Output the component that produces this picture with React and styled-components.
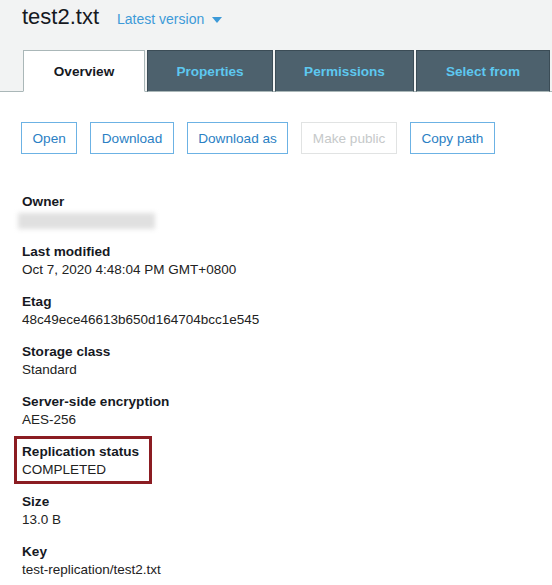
import React from "react";
import styled, { createGlobalStyle } from "styled-components";

const GlobalStyle = createGlobalStyle`
  html, body {
    margin: 0;
    padding: 0;
    background: #ffffff;
  }
  body {
    font-family: "Liberation Sans", Arial, sans-serif;
    color: #16191f;
  }
  *, *::before, *::after { box-sizing: border-box; }
`;

const Page = styled.div`
  width: 552px;
  min-height: 585px;
  background: #ffffff;
  overflow: hidden;
`;

const Header = styled.header`
  background: #f2f3f3;
`;

const TitleRow = styled.div`
  display: flex;
  align-items: baseline;
  gap: 18px;
  padding: 2px 22px 0;
  height: 50px;
`;

const Title = styled.h1`
  margin: 0;
  font-size: 22px;
  line-height: 30px;
  font-weight: 400;
  color: #16191f;
`;

const VersionPicker = styled.button`
  display: inline-flex;
  align-items: center;
  gap: 8px;
  border: 0;
  background: transparent;
  padding: 0;
  font-family: inherit;
  font-size: 14px;
  color: #3d9ad8;
  cursor: pointer;
`;

const Caret = styled.span`
  display: inline-block;
  width: 0;
  height: 0;
  border-left: 5px solid transparent;
  border-right: 5px solid transparent;
  border-top: 6px solid #3d9ad8;
  margin-top: 1px;
`;

const TabBar = styled.nav`
  display: flex;
  align-items: flex-end;
  gap: 2px;
  padding-left: 23px;
  border-bottom: 1px solid #aab7b8;
`;

const Tab = styled.div`
  width: ${(p) => p.$w}px;
  flex: none;
  height: 42px;
  display: flex;
  align-items: center;
  justify-content: center;
  margin-bottom: -1px;
  white-space: nowrap;
  font-size: 13.6px;
  font-weight: 700;
  border: 1px solid ${(p) => (p.$active ? "#aab7b8" : "#3b4c56")};
  border-bottom: ${(p) => (p.$active ? "1px solid #ffffff" : "1px solid #aab7b8")};
  background: ${(p) => (p.$active ? "#ffffff" : "#4d616d")};
  color: ${(p) => (p.$active ? "#16191f" : "#5dc8f0")};
`;

const Content = styled.main`
  padding: 30px 0 0 21px;
`;

const ButtonRow = styled.div`
  display: flex;
  gap: 13px;
`;

const ActionButton = styled.button`
  height: 32px;
  padding: 0 10.5px;
  background: #ffffff;
  font-family: inherit;
  font-size: 13.6px;
  border: 1px solid ${(p) => (p.disabled ? "#e1e3e3" : "#6cb2e4")};
  color: ${(p) => (p.disabled ? "#c6c9ca" : "#2b7fc4")};
  border-radius: 0;
`;

const PropList = styled.dl`
  margin: 39px 0 0 1px;
  display: flex;
  flex-direction: column;
  gap: 14px;
`;

const PropItem = styled.div`
  position: relative;
  width: fit-content;
  min-width: 120px;
`;

const Highlight = styled(PropItem)`
  &::after {
    content: "";
    position: absolute;
    left: -8px;
    top: -7px;
    width: 138px;
    height: 48px;
    border: 3px solid #8b1c22;
    pointer-events: none;
  }
`;

const Label = styled.dt`
  font-size: 13.6px;
  line-height: 18px;
  font-weight: 700;
  color: #16191f;
`;

const Value = styled.dd`
  margin: 0;
  font-size: 13.5px;
  line-height: 18px;
  color: #222222;
  white-space: nowrap;
`;

const Redacted = styled.div`
  width: 137px;
  height: 16px;
  margin: 2px 0 0 -4px;
  background: #e0e0e0;
  filter: blur(2.5px);
`;

const tabs = [
  { name: "Overview", active: true, w: 122 },
  { name: "Properties", w: 126 },
  { name: "Permissions", w: 139 },
  { name: "Select from", w: 134 },
];

const buttons = [
  { label: "Open" },
  { label: "Download" },
  { label: "Download as" },
  { label: "Make public", disabled: true },
  { label: "Copy path" },
];

const props = [
  { label: "Owner", redacted: true },
  { label: "Last modified", value: "Oct 7, 2020 4:48:04 PM GMT+0800" },
  { label: "Etag", value: "48c49ece46613b650d164704bcc1e545" },
  { label: "Storage class", value: "Standard" },
  { label: "Server-side encryption", value: "AES-256" },
  { label: "Replication status", value: "COMPLETED", highlight: true },
  { label: "Size", value: "13.0 B" },
  { label: "Key", value: "test-replication/test2.txt" },
];

export default function App() {
  return (
    <Page>
      <GlobalStyle />
      <Header>
        <TitleRow>
          <Title>test2.txt</Title>
          <VersionPicker>
            Latest version <Caret />
          </VersionPicker>
        </TitleRow>
        <TabBar>
          {tabs.map((t) => (
            <Tab key={t.name} $active={t.active} $w={t.w}>
              {t.name}
            </Tab>
          ))}
        </TabBar>
      </Header>
      <Content>
        <ButtonRow>
          {buttons.map((b) => (
            <ActionButton key={b.label} disabled={b.disabled}>
              {b.label}
            </ActionButton>
          ))}
        </ButtonRow>
        <PropList>
          {props.map((p) => {
            const Item = p.highlight ? Highlight : PropItem;
            return (
              <Item key={p.label}>
                <Label>{p.label}</Label>
                {p.redacted ? <Redacted /> : <Value>{p.value}</Value>}
              </Item>
            );
          })}
        </PropList>
      </Content>
    </Page>
  );
}
